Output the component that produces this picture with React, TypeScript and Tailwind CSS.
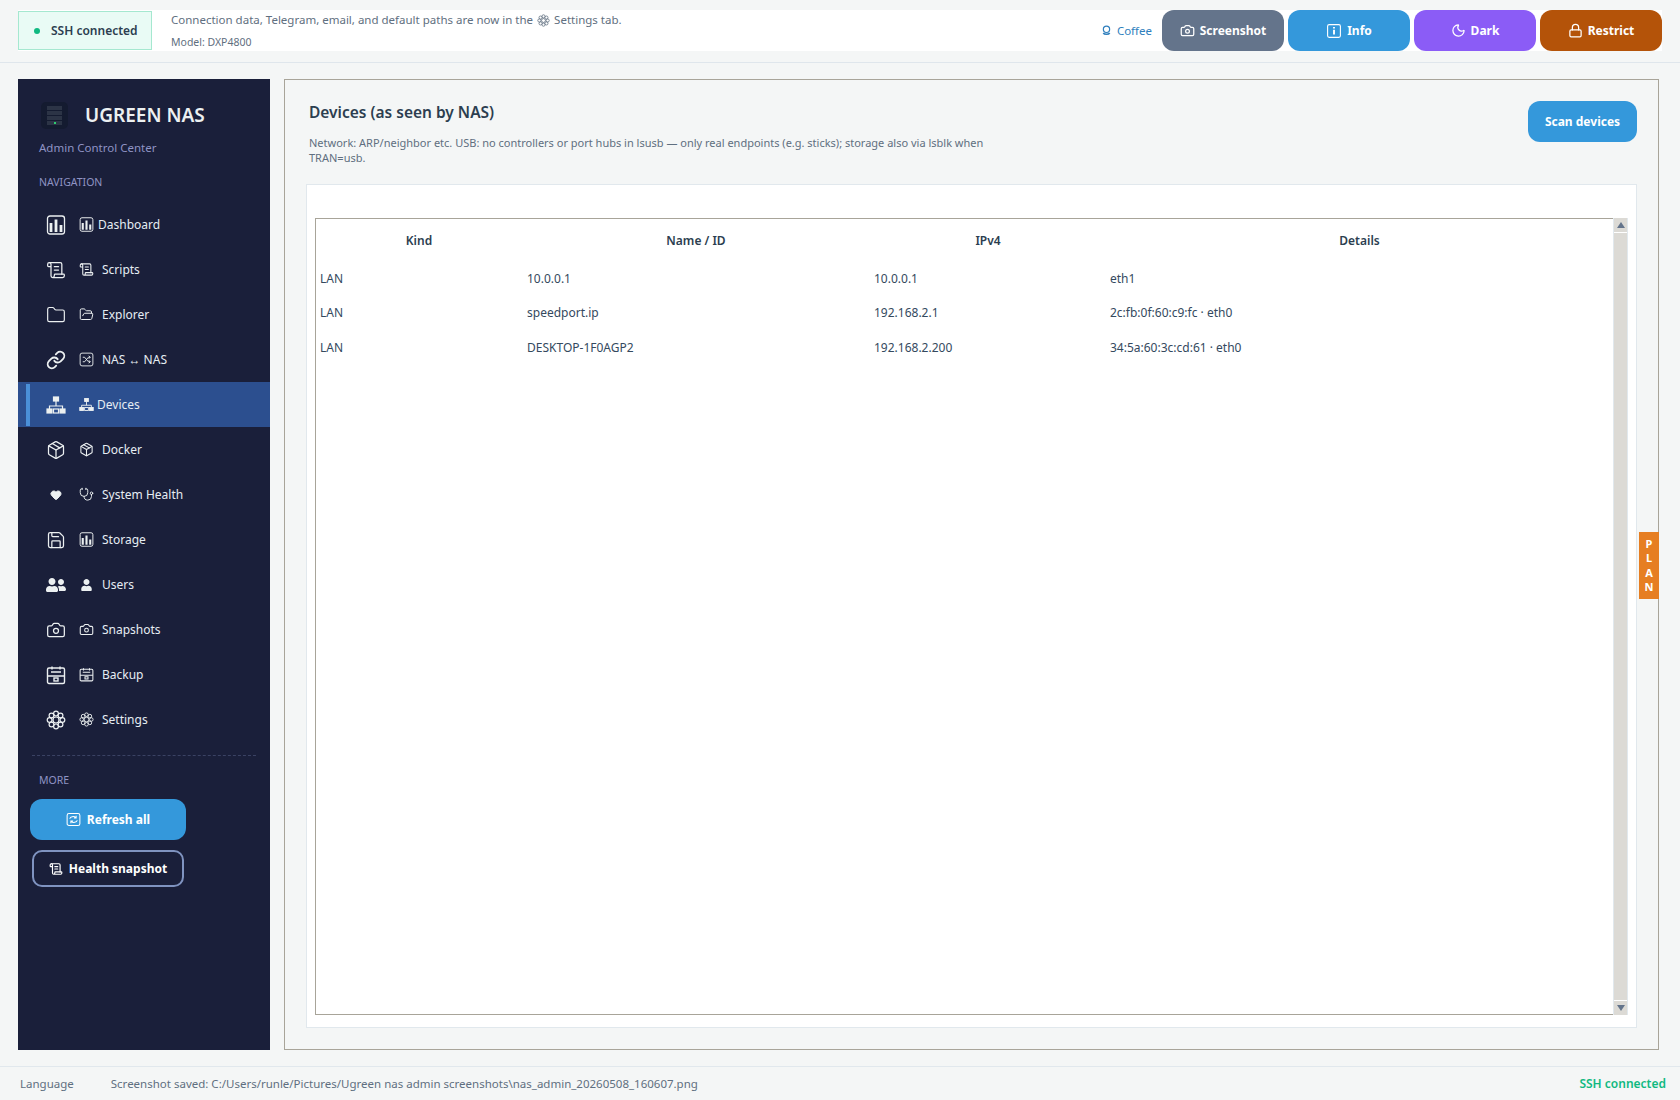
import React from "react";
import {
  Camera,
  Folder,
  FolderOpen,
  Heart,
  Link,
  Lock,
  Moon,
  Package,
  Save,
  ScrollText,
  Stethoscope,
} from "lucide-react";
import { FaUser, FaUserFriends } from "react-icons/fa";

type IconProps = { className?: string };

const ChartIcon = ({ className }: IconProps) => (
  <svg viewBox="0 0 20 20" className={className} fill="none" stroke="currentColor" strokeWidth="1.3">
    <rect x="1.5" y="1" width="17" height="18" rx="2.5" />
    <path d="M5 17V8M10 17V4.5M15 17v-7" strokeWidth="2.8" />
  </svg>
);

const ShuffleBoxIcon = ({ className }: IconProps) => (
  <svg viewBox="0 0 20 20" className={className} fill="none" stroke="currentColor" strokeWidth="1.2">
    <rect x="1.5" y="1.5" width="17" height="17" rx="2.5" />
    <path d="M5 7h2.5l5 6H15M5 13h2.5l5-6H15M13 5l2 2-2 2M13 11l2 2-2 2" />
  </svg>
);

const NetworkIcon = ({ className }: IconProps) => (
  <svg viewBox="0 0 20 20" className={className} fill="none" stroke="currentColor" strokeWidth="1.2">
    <rect x="7.5" y="2" width="5" height="4" fill="currentColor" />
    <path d="M10 6v5M3.5 14v-3h13v3" />
    <rect x="1" y="14" width="5" height="4" fill="currentColor" />
    <rect x="14" y="14" width="5" height="4" fill="currentColor" />
    <rect x="7.5" y="14" width="5" height="4" />
  </svg>
);

const GearIcon = ({ className }: IconProps) => (
  <svg viewBox="0 0 20 20" className={className} fill="none" stroke="currentColor" strokeWidth="1.2">
    <circle cx="10" cy="10" r="3" />
    <circle cx="10" cy="3.6" r="2.4" />
    <circle cx="10" cy="16.4" r="2.4" />
    <circle cx="3.6" cy="10" r="2.4" />
    <circle cx="16.4" cy="10" r="2.4" />
    <circle cx="5.5" cy="5.5" r="2.4" />
    <circle cx="14.5" cy="5.5" r="2.4" />
    <circle cx="5.5" cy="14.5" r="2.4" />
    <circle cx="14.5" cy="14.5" r="2.4" />
  </svg>
);

const BackupIcon = ({ className }: IconProps) => (
  <svg viewBox="0 0 20 20" className={className} fill="none" stroke="currentColor" strokeWidth="1.4">
    <rect x="1.5" y="3" width="17" height="15.5" rx="1.5" />
    <path d="M1.5 11h17M5 7h10M6 1.5v3M14 1.5v3" />
    <rect x="8" y="13" width="4" height="3" />
  </svg>
);

const InfoBoxIcon = ({ className }: IconProps) => (
  <svg viewBox="0 0 20 20" className={className} fill="none" stroke="currentColor" strokeWidth="1.4">
    <rect x="2" y="2" width="16" height="16" rx="2" />
    <path d="M10 8.5v6" strokeWidth="2.4" />
    <path d="M10 5v1.8" strokeWidth="2.4" />
  </svg>
);

const RefreshBoxIcon = ({ className }: IconProps) => (
  <svg viewBox="0 0 20 20" className={className} fill="none" stroke="currentColor" strokeWidth="1.4">
    <rect x="1.5" y="2" width="17" height="16" rx="2.5" />
    <path d="M5 9a4.5 3.5 0 0 1 8-1.5M15 11a4.5 3.5 0 0 1-8 1.5M13.5 5v3h-3M6.5 15v-3h3" />
  </svg>
);

const CoffeeIcon = ({ className }: IconProps) => (
  <svg viewBox="0 0 14 14" className={className} fill="none" stroke="currentColor" strokeWidth="1.5">
    <circle cx="7" cy="5.5" r="4" />
    <path d="M3 10c1 2.5 7 2.5 8 0" strokeWidth="2" />
  </svg>
);

const LogoIcon = () => (
  <div className="flex h-[27px] w-[27px] flex-col items-center justify-center gap-[1px] rounded-[5px] bg-[#141b30]">
    <div className="h-[4px] w-[15px] bg-[#2c3446]" />
    <div className="h-[4px] w-[15px] bg-[#2c3446]" />
    <div className="h-[4px] w-[15px] bg-[#2c3446]" />
    <div className="flex h-[4px] w-[15px] items-center justify-center bg-[#2c3446]">
      <div className="h-[2px] w-[2px] bg-[#2ecc71]" />
    </div>
  </div>
);

type NavItem = {
  label: string;
  big: React.ReactNode;
  small: React.ReactNode;
  gap: string;
};

const bigCls = "h-[20px] w-[20px]";
const smallCls = "h-[15px] w-[15px]";

const navItems: NavItem[] = [
  { label: "Dashboard", big: <ChartIcon className={bigCls} />, small: <ChartIcon className={smallCls} />, gap: "ml-[4px]" },
  { label: "Scripts", big: <ScrollText className={bigCls} strokeWidth={1.5} />, small: <ScrollText className={smallCls} strokeWidth={1.7} />, gap: "ml-[8px]" },
  { label: "Explorer", big: <Folder className={bigCls} strokeWidth={1.4} />, small: <FolderOpen className={smallCls} strokeWidth={1.6} />, gap: "ml-[8px]" },
  { label: "NAS ↔ NAS", big: <Link className={bigCls} strokeWidth={2.2} />, small: <ShuffleBoxIcon className={smallCls} />, gap: "ml-[8px]" },
  { label: "Devices", big: <NetworkIcon className={bigCls} />, small: <NetworkIcon className={smallCls} />, gap: "ml-[3px]" },
  { label: "Docker", big: <Package className={bigCls} strokeWidth={1.5} />, small: <Package className={smallCls} strokeWidth={1.7} />, gap: "ml-[8px]" },
  { label: "System Health", big: <Heart className="h-[12px] w-[20px]" fill="currentColor" />, small: <Stethoscope className={smallCls} strokeWidth={1.5} />, gap: "ml-[8px]" },
  { label: "Storage", big: <Save className={bigCls} strokeWidth={1.5} />, small: <ChartIcon className={smallCls} />, gap: "ml-[8px]" },
  { label: "Users", big: <FaUserFriends className={bigCls} />, small: <FaUser className="h-[12px] w-[15px]" />, gap: "ml-[8px]" },
  { label: "Snapshots", big: <Camera className={bigCls} strokeWidth={1.5} />, small: <Camera className={smallCls} strokeWidth={1.7} />, gap: "ml-[8px]" },
  { label: "Backup", big: <BackupIcon className={bigCls} />, small: <BackupIcon className={smallCls} />, gap: "ml-[8px]" },
  { label: "Settings", big: <GearIcon className={bigCls} />, small: <GearIcon className={smallCls} />, gap: "ml-[8px]" },
];

const rows = [
  { kind: "LAN", name: "10.0.0.1", ip: "10.0.0.1", details: "eth1" },
  { kind: "LAN", name: "speedport.ip", ip: "192.168.2.1", details: "2c:fb:0f:60:c9:fc · eth0" },
  { kind: "LAN", name: "DESKTOP-1F0AGP2", ip: "192.168.2.200", details: "34:5a:60:3c:cd:61 · eth0" },
];

const TopButton = ({ bg, icon, label }: { bg: string; icon: React.ReactNode; label: string }) => (
  <button className={`flex h-[41px] w-[122px] items-center justify-center gap-[5px] rounded-[12px] text-[12px] font-bold text-white ${bg}`}>
    {icon}
    {label}
  </button>
);

export default function App() {
  return (
    <div className="flex h-[1100px] w-full flex-col overflow-hidden bg-[#f4f6f6] font-['Noto_Sans',sans-serif] text-[#2c3e50]">
      <header className="flex h-[63px] shrink-0 items-start border-b border-[#dfe6ec] px-[18px] pt-[10px] pr-[18px]">
        <div className="flex w-full items-stretch bg-white">
          <div className="my-[1px] flex h-[39px] w-[134px] items-center border border-[#a5e8d0] bg-[#e9fbf5] pl-[15px]">
            <span className="h-[6px] w-[6px] rounded-full bg-[#10b981]" />
            <span className="ml-[11px] text-[12px] font-semibold">SSH connected</span>
          </div>
          <div className="ml-[19px] flex flex-col pt-[2px] text-[#5f6f80]">
            <span className="flex items-center text-[11.5px] leading-[16px]">
              Connection data, Telegram, email, and default paths are now in the
              <GearIcon className="mx-[4px] h-[13px] w-[13px]" />
              Settings tab.
            </span>
            <span className="mt-[7px] text-[10.5px] leading-[14px]">Model: DXP4800</span>
          </div>
          <div className="ml-auto flex items-center gap-[4px]">
            <span className="mr-[6px] flex items-center gap-[5px] text-[11.5px] text-[#2f7fbd]">
              <CoffeeIcon className="h-[11px] w-[11px]" />
              Coffee
            </span>
            <TopButton bg="bg-[#64748b]" icon={<Camera className="h-[15px] w-[15px]" strokeWidth={2} />} label="Screenshot" />
            <TopButton bg="bg-[#3498db]" icon={<InfoBoxIcon className="h-[16px] w-[16px]" />} label="Info" />
            <TopButton bg="bg-[#8b5cf6]" icon={<Moon className="h-[15px] w-[15px]" strokeWidth={2} />} label="Dark" />
            <TopButton bg="bg-[#b45309]" icon={<Lock className="h-[15px] w-[15px]" strokeWidth={2} />} label="Restrict" />
          </div>
        </div>
      </header>

      <div className="flex h-[971px] shrink-0 gap-[14px] pl-[18px] pr-[21px] mt-[16px]">
        <aside className="flex w-[252px] shrink-0 flex-col bg-[#1a1f3a] pt-[23px] text-[#ecf0f1]">
          <div className="flex items-center pl-[23px]">
            <LogoIcon />
            <span className="ml-[17px] text-[19px] leading-[27px] font-semibold">UGREEN NAS</span>
          </div>
          <div className="mt-[11px] pl-[21px] text-[11.5px] leading-[16px] text-[#8f93c4]">Admin Control Center</div>
          <div className="mt-[18px] pl-[21px] text-[10.5px] leading-[16px] text-[#8f93c4]">NAVIGATION</div>
          <nav className="mt-[12px] flex flex-col">
            {navItems.map((item) => {
              const active = item.label === "Devices";
              return (
                <div key={item.label} className={`flex h-[45px] items-center pl-[8px] ${active ? "bg-[#2c4f8f]" : ""}`}>
                  <span className={`h-[42px] w-[4px] ${active ? "bg-[#4a90d9]" : ""}`} />
                  <span className="ml-[16px] flex w-[20px] justify-center">{item.big}</span>
                  <span className="ml-[13px] flex w-[15px] justify-center">{item.small}</span>
                  <span className={`${item.gap} text-[12px] text-[#e6edf3]`}>{item.label}</span>
                </div>
              );
            })}
          </nav>
          <div className="mx-[14px] mt-[13px] border-t border-dashed border-[#3a4263]" />
          <div className="mt-[16px] pl-[21px] text-[10.5px] leading-[16px] text-[#8f93c4]">MORE</div>
          <button className="mt-[11px] ml-[12px] flex h-[41px] w-[156px] items-center justify-center gap-[6px] rounded-[12px] bg-[#3498db] text-[12px] font-bold text-white">
            <RefreshBoxIcon className="h-[15px] w-[15px]" />
            Refresh all
          </button>
          <button className="mt-[10px] ml-[14px] flex h-[37px] w-[152px] items-center justify-center gap-[6px] rounded-[10px] border-2 border-[#7f93c0] text-[12px] font-bold text-white">
            <ScrollText className="h-[14px] w-[14px]" strokeWidth={2} />
            Health snapshot
          </button>
        </aside>

        <main className="relative flex min-w-0 flex-1 flex-col border border-[#a8a499] bg-[#f4f6f6] px-[21px] pb-[21px]">
          <div className="flex h-[104px] shrink-0 items-start justify-between pt-[21px]">
            <div className="pl-[3px]">
              <h1 className="text-[15.5px] leading-[22px] font-semibold text-[#2c3e50]">Devices (as seen by NAS)</h1>
              <p className="mt-[12px] w-[690px] text-[11px] leading-[15px] text-[#5f6f80]">
                Network: ARP/neighbor etc. USB: no controllers or port hubs in lsusb — only real endpoints (e.g. sticks); storage also via lsblk when TRAN=usb.
              </p>
            </div>
            <button className="h-[41px] w-[109px] rounded-[12px] bg-[#3498db] text-[12px] font-bold text-white">Scan devices</button>
          </div>

          <div className="flex min-h-0 flex-1 border border-[#e1e8ed] bg-white pt-[33px] pr-[8px] pb-[12px] pl-[8px]">
            <div className="min-w-0 flex-1 border-t border-l border-b border-[#a8a499] pt-[1px]">
              <table className="w-full table-fixed border-collapse text-[12px]">
                <colgroup>
                  <col className="w-[206px]" />
                  <col className="w-[348px]" />
                  <col className="w-[236px]" />
                  <col />
                </colgroup>
                <thead>
                  <tr className="h-[42px] font-semibold">
                    <th className="font-semibold">Kind</th>
                    <th className="font-semibold">Name / ID</th>
                    <th className="font-semibold">IPv4</th>
                    <th className="font-semibold">Details</th>
                  </tr>
                </thead>
                <tbody className="text-[#34495e]">
                  {rows.map((r) => (
                    <tr key={r.name} className="h-[34.3px]">
                      <td className="pl-[4px]">{r.kind}</td>
                      <td className="pl-[5px]">{r.name}</td>
                      <td className="pl-[4px]">{r.ip}</td>
                      <td className="pl-[4px]">{r.details}</td>
                    </tr>
                  ))}
                </tbody>
              </table>
            </div>
            <div className="flex w-[15px] shrink-0 flex-col gap-[1px] border-x border-[#e1e8ed]">
              <div className="flex h-[14px] items-center justify-center bg-[#dcdad5]">
                <span className="h-0 w-0 border-x-[4px] border-b-[6px] border-x-transparent border-b-[#64748b]" />
              </div>
              <div className="flex-1 bg-[#dcdad5]" />
              <div className="flex h-[14px] items-center justify-center bg-[#dcdad5]">
                <span className="h-0 w-0 border-x-[4px] border-t-[6px] border-x-transparent border-t-[#64748b]" />
              </div>
            </div>
          </div>

          <div className="absolute top-[452px] -right-[1px] flex h-[67px] w-[20px] flex-col items-center justify-center bg-[#e67e22] text-[11px] leading-[14.5px] font-bold text-white">
            <span>P</span>
            <span>L</span>
            <span>A</span>
            <span>N</span>
          </div>
        </main>
      </div>

      <footer className="mt-[16px] flex h-[34px] shrink-0 items-center border-t border-[#e1e8ed] pr-[14px] pl-[20px] text-[11.5px] text-[#5f6f80]">
        <span>Language</span>
        <span className="ml-[37px]">Screenshot saved: C:/Users/runle/Pictures/Ugreen nas admin screenshots\nas_admin_20260508_160607.png</span>
        <span className="ml-auto text-[12px] font-semibold text-[#10b981]">SSH connected</span>
      </footer>
    </div>
  );
}
